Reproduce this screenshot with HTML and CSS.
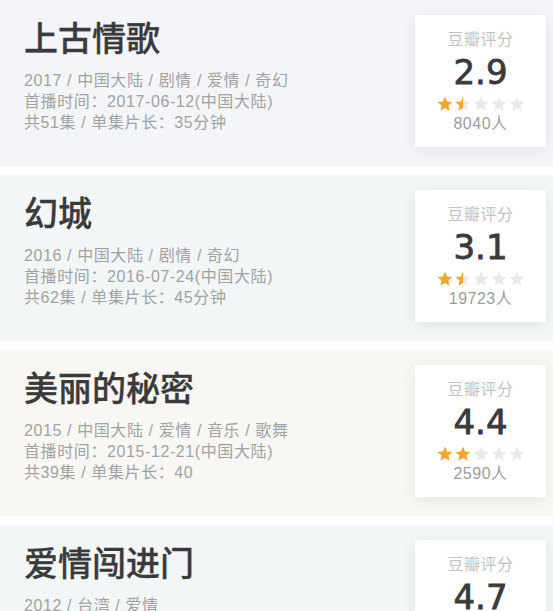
FILE: index.html
```html
<!DOCTYPE html>
<html lang="zh-CN">
<head>
    <meta charset="UTF-8">
    <meta name="viewport" content="width=device-width, initial-scale=1.0">
    <title>豆瓣评分 - 剧集</title>
    <link rel="stylesheet" href="styles.css">
</head>
<body>

    <div class="show show-blue">
        <div class="info">
            <h2>上古情歌</h2>
            <p class="meta">2017 / 中国大陆 / 剧情 / 爱情 / 奇幻</p>
            <p class="meta">首播时间：2017-06-12(中国大陆)</p>
            <p class="meta">共51集 / 单集片长：35分钟</p>
        </div>
        <div class="rating">
            <span class="label">豆瓣评分</span>
            <span class="score">2.9</span>
            <div class="stars">
                <svg viewBox="0 0 24 24"><path class="on" d="M12 17.27L18.18 21l-1.64-7.03L22 9.24l-7.19-.61L12 2 9.19 8.63 2 9.24l5.46 4.73L5.82 21z"/></svg>
                <svg viewBox="0 0 24 24"><path class="off" d="M12 17.27L18.18 21l-1.64-7.03L22 9.24l-7.19-.61L12 2 9.19 8.63 2 9.24l5.46 4.73L5.82 21z"/><path class="on" d="M12 2L9.19 8.63 2 9.24l5.46 4.73L5.82 21 12 17.27z"/></svg>
                <svg viewBox="0 0 24 24"><path class="off" d="M12 17.27L18.18 21l-1.64-7.03L22 9.24l-7.19-.61L12 2 9.19 8.63 2 9.24l5.46 4.73L5.82 21z"/></svg>
                <svg viewBox="0 0 24 24"><path class="off" d="M12 17.27L18.18 21l-1.64-7.03L22 9.24l-7.19-.61L12 2 9.19 8.63 2 9.24l5.46 4.73L5.82 21z"/></svg>
                <svg viewBox="0 0 24 24"><path class="off" d="M12 17.27L18.18 21l-1.64-7.03L22 9.24l-7.19-.61L12 2 9.19 8.63 2 9.24l5.46 4.73L5.82 21z"/></svg>
            </div>
            <span class="count">8040人</span>
        </div>
    </div>

    <div class="show show-cyan">
        <div class="info">
            <h2>幻城</h2>
            <p class="meta">2016 / 中国大陆 / 剧情 / 奇幻</p>
            <p class="meta">首播时间：2016-07-24(中国大陆)</p>
            <p class="meta">共62集 / 单集片长：45分钟</p>
        </div>
        <div class="rating">
            <span class="label">豆瓣评分</span>
            <span class="score">3.1</span>
            <div class="stars">
                <svg viewBox="0 0 24 24"><path class="on" d="M12 17.27L18.18 21l-1.64-7.03L22 9.24l-7.19-.61L12 2 9.19 8.63 2 9.24l5.46 4.73L5.82 21z"/></svg>
                <svg viewBox="0 0 24 24"><path class="off" d="M12 17.27L18.18 21l-1.64-7.03L22 9.24l-7.19-.61L12 2 9.19 8.63 2 9.24l5.46 4.73L5.82 21z"/><path class="on" d="M12 2L9.19 8.63 2 9.24l5.46 4.73L5.82 21 12 17.27z"/></svg>
                <svg viewBox="0 0 24 24"><path class="off" d="M12 17.27L18.18 21l-1.64-7.03L22 9.24l-7.19-.61L12 2 9.19 8.63 2 9.24l5.46 4.73L5.82 21z"/></svg>
                <svg viewBox="0 0 24 24"><path class="off" d="M12 17.27L18.18 21l-1.64-7.03L22 9.24l-7.19-.61L12 2 9.19 8.63 2 9.24l5.46 4.73L5.82 21z"/></svg>
                <svg viewBox="0 0 24 24"><path class="off" d="M12 17.27L18.18 21l-1.64-7.03L22 9.24l-7.19-.61L12 2 9.19 8.63 2 9.24l5.46 4.73L5.82 21z"/></svg>
            </div>
            <span class="count">19723人</span>
        </div>
    </div>

    <div class="show show-warm">
        <div class="info">
            <h2>美丽的秘密</h2>
            <p class="meta">2015 / 中国大陆 / 爱情 / 音乐 / 歌舞</p>
            <p class="meta">首播时间：2015-12-21(中国大陆)</p>
            <p class="meta">共39集 / 单集片长：40</p>
        </div>
        <div class="rating">
            <span class="label">豆瓣评分</span>
            <span class="score">4.4</span>
            <div class="stars">
                <svg viewBox="0 0 24 24"><path class="on" d="M12 17.27L18.18 21l-1.64-7.03L22 9.24l-7.19-.61L12 2 9.19 8.63 2 9.24l5.46 4.73L5.82 21z"/></svg>
                <svg viewBox="0 0 24 24"><path class="on" d="M12 17.27L18.18 21l-1.64-7.03L22 9.24l-7.19-.61L12 2 9.19 8.63 2 9.24l5.46 4.73L5.82 21z"/></svg>
                <svg viewBox="0 0 24 24"><path class="off" d="M12 17.27L18.18 21l-1.64-7.03L22 9.24l-7.19-.61L12 2 9.19 8.63 2 9.24l5.46 4.73L5.82 21z"/></svg>
                <svg viewBox="0 0 24 24"><path class="off" d="M12 17.27L18.18 21l-1.64-7.03L22 9.24l-7.19-.61L12 2 9.19 8.63 2 9.24l5.46 4.73L5.82 21z"/></svg>
                <svg viewBox="0 0 24 24"><path class="off" d="M12 17.27L18.18 21l-1.64-7.03L22 9.24l-7.19-.61L12 2 9.19 8.63 2 9.24l5.46 4.73L5.82 21z"/></svg>
            </div>
            <span class="count">2590人</span>
        </div>
    </div>

    <div class="show show-cyan">
        <div class="info">
            <h2>爱情闯进门</h2>
            <p class="meta">2012 / 台湾 / 爱情</p>
        </div>
        <div class="rating">
            <span class="label">豆瓣评分</span>
            <span class="score">4.7</span>
        </div>
    </div>

</body>
</html>
```

FILE: styles.css
```css
body {
    margin: 0;
    padding: 0;
    background: #fff;
    font-family: "Liberation Sans", "Noto Sans CJK SC", sans-serif;
}

.show {
    display: flex;
    align-items: flex-start;
    padding: 15px 7px 19px 24px;
    margin-bottom: 9px;
}

.show-blue {
    background-color: #f4f5f9;
}

.show-cyan {
    background-color: #f2f6f7;
}

.show-warm {
    background-color: #f8f7f4;
}

.info {
    flex: 1;
}

.info h2 {
    margin: 0 0 11px 0;
    font-family: "Noto Sans CJK SC", sans-serif;
    font-size: 34px;
    font-weight: 500;
    line-height: 44px;
    color: #3a3a3a;
    -webkit-text-stroke: 0.3px #3a3a3a;
}

.meta {
    margin: 0;
    font-size: 16px;
    line-height: 21px;
    letter-spacing: 0.6px;
    color: #a2a2a2;
}

.rating {
    width: 131px;
    height: 132px;
    box-sizing: border-box;
    padding-top: 14px;
    background: #fff;
    box-shadow: 0 3px 14px rgba(0, 0, 0, 0.08);
    display: flex;
    flex-direction: column;
    align-items: center;
}

.label {
    font-size: 16px;
    line-height: 22px;
    letter-spacing: 0.5px;
    color: #c3c3c3;
}

.score {
    font-family: "DejaVu Sans", sans-serif;
    font-size: 34px;
    line-height: 42px;
    color: #3a3a3a;
    -webkit-text-stroke: 0.8px #3a3a3a;
}

.stars {
    display: flex;
    margin-top: 2px;
    height: 18px;
}

.stars svg {
    width: 18px;
    height: 18px;
}

.stars .on {
    fill: #f3a531;
}

.stars .off {
    fill: #e9e9e9;
}

.count {
    font-size: 16px;
    line-height: 21px;
    letter-spacing: 0.5px;
    color: #9c9c9c;
}
```
